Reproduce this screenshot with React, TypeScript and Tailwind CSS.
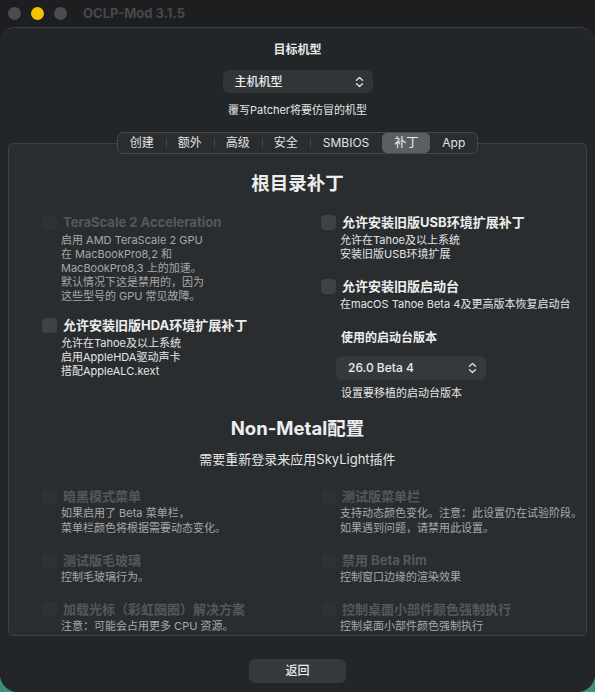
import React from "react";

const FONT = { fontFamily: 'Inter, "Noto Sans CJK SC", "Liberation Sans", sans-serif' };

function Chevrons() {
  return (
    <svg width="9" height="12" viewBox="0 0 9 12" fill="none" stroke="#d8d8d8" strokeWidth="1.5" strokeLinecap="round" strokeLinejoin="round">
      <path d="M1.5 4.2 4.5 1.5 7.5 4.2" />
      <path d="M1.5 7.8 4.5 10.5 7.5 7.8" />
    </svg>
  );
}

function Check({ disabled }: { disabled?: boolean }) {
  return (
    <div className={disabled ? "w-[15px] h-[15px] rounded-[4px] shrink-0 bg-[#2f3234]" : "w-[15px] h-[15px] rounded-[4px] shrink-0 bg-[#3f4244]"} />
  );
}

function Item({
  label,
  lines,
  disabled,
  loose,
}: {
  label: string;
  lines: string[];
  disabled?: boolean;
  loose?: boolean;
}) {
  return (
    <div className="flex flex-col">
      <div className="flex items-center gap-[6px] h-[16px]">
        <Check disabled={disabled} />
        <span
          className={
            disabled
              ? "text-[13px] leading-[16px] font-bold text-[#55585b] whitespace-nowrap"
              : "text-[13px] leading-[16px] font-bold text-[#ededed] whitespace-nowrap"
          }
        >
          {label}
        </span>
      </div>
      <div
        className={
          (loose ? "mt-[2px] leading-[15px] " : "mt-[3px] leading-[14px] ") +
          (disabled ? "pl-[19px] text-[11px] text-[#a6a8aa]" : "pl-[19px] text-[11px] text-[#e4e4e4]")
        }
      >
        {lines.map((l, i) => (
          <div key={i} className="whitespace-nowrap">
            {l}
          </div>
        ))}
      </div>
    </div>
  );
}

const tabs = ["创建", "额外", "高级", "安全", "SMBIOS", "补丁", "App"];

export default function App() {
  return (
    <div className="w-[595px] h-[692px] bg-[#3f8c7f] overflow-hidden" style={FONT}>
      <div className="h-full flex flex-col bg-[#1d1e20] rounded-b-[18px] overflow-hidden">
        {/* title bar */}
        <div className="h-[27px] shrink-0 flex items-center pl-[8px]">
          <div className="flex items-center gap-[10px]">
            <div className="w-[13px] h-[13px] rounded-full bg-[#4a4c4f]" />
            <div className="w-[13px] h-[13px] rounded-full bg-[#f5c400]" />
            <div className="w-[13px] h-[13px] rounded-full bg-[#4a4c4f]" />
          </div>
          <span className="ml-[16px] text-[13px] font-bold text-[#46484b]">OCLP-Mod 3.1.5</span>
        </div>

        {/* sheet */}
        <div className="flex-1 flex flex-col items-center bg-[#232628] rounded-t-[15px] rounded-b-[18px] border-t border-[#3b3d40] pt-[14px]">
          <div className="text-[12px] leading-[16px] font-bold text-[#e6e6e6]">目标机型</div>
          <div className="mt-[12px] w-[150px] h-[23px] rounded-[6px] bg-[#323537] flex items-center justify-between pl-[12px] pr-[9px]">
            <span className="text-[12px] font-medium text-[#ececec]">主机机型</span>
            <Chevrons />
          </div>
          <div className="mt-[10px] text-[11px] leading-[14px] text-[#e4e4e4]">覆写Patcher将要仿冒的机型</div>

          {/* tabs */}
          <div className="relative z-10 mt-[15px] h-[22px] flex items-stretch rounded-[6px] border border-[#47494c] bg-[#2a2d2f]">
            {tabs.map((t, i) => {
              const sel = t === "补丁";
              const showSep = i > 0 && i < 5;
              return (
                <div key={t} className="relative flex items-stretch">
                  {showSep && <div className="absolute left-0 top-[6px] w-px h-[9px] bg-[#45484b]" />}
                  <div
                    className={
                      sel
                        ? "px-[12px] flex items-center rounded-[5px] bg-[#5c5f62] text-[12px] text-[#f0f0f0]"
                        : t === "SMBIOS"
                        ? "px-[13px] flex items-center text-[12px] text-[#e2e2e2]"
                        : "px-[12px] flex items-center text-[12px] text-[#e2e2e2]"
                    }
                  >
                    {t}
                  </div>
                </div>
              );
            })}
          </div>

          {/* group box */}
          <div className="-mt-[11px] w-[579px] h-[493px] shrink-0 rounded-[5px] border border-[#3f4245] bg-[#2a2d2f] overflow-hidden flex flex-col">
            <div className="pt-[27px] text-center text-[18.5px] leading-[24px] font-bold text-[#ededed]">根目录补丁</div>

            <div className="mt-[19px] pl-[33px] grid grid-cols-[279px_1fr]">
              <div className="flex flex-col">
                <Item
                  disabled
                  label="TeraScale 2 Acceleration"
                  lines={[
                    "启用 AMD TeraScale 2 GPU",
                    "在 MacBookPro8,2 和",
                    "MacBookPro8,3 上的加速。",
                    "默认情况下这是禁用的，因为",
                    "这些型号的 GPU 常见故障。",
                  ]}
                />
                <div className="mt-[14px]">
                  <Item
                    label="允许安装旧版HDA环境扩展补丁"
                    lines={["允许在Tahoe及以上系统", "启用AppleHDA驱动声卡", "搭配AppleALC.kext"]}
                  />
                </div>
              </div>
              <div className="flex flex-col">
                <Item label="允许安装旧版USB环境扩展补丁" lines={["允许在Tahoe及以上系统", "安装旧版USB环境扩展"]} />
                <div className="mt-[17px]">
                  <Item label="允许安装旧版启动台" lines={["在macOS Tahoe Beta 4及更高版本恢复启动台"]} />
                </div>
                <div className="mt-[19px] pl-[20px] text-[12px] leading-[16px] font-bold text-[#ededed]">使用的启动台版本</div>
                <div className="mt-[10px] ml-[15px] w-[150px] h-[24px] rounded-[6px] bg-[#36393b] flex items-center justify-between pl-[12px] pr-[9px]">
                  <span className="text-[12px] font-medium text-[#ececec]">26.0 Beta 4</span>
                  <Chevrons />
                </div>
                <div className="mt-[6px] pl-[20px] text-[11px] leading-[14px] text-[#e4e4e4]">设置要移植的启动台版本</div>
              </div>
            </div>

            <div className="mt-[16px] text-center text-[18.5px] leading-[24px] font-bold text-[#ededed]">Non-Metal配置</div>
            <div className="mt-[11px] text-center text-[13px] leading-[16px] text-[#e6e6e6]">需要重新登录来应用SkyLight插件</div>

            <div className="mt-[21px] pl-[33px] grid grid-cols-[279px_1fr] gap-y-[16px]">
              <Item disabled loose label="暗黑模式菜单" lines={["如果启用了 Beta 菜单栏，", "菜单栏颜色将根据需要动态变化。"]} />
              <Item
                disabled
                loose
                label="测试版菜单栏"
                lines={["支持动态颜色变化。注意：此设置仍在试验阶段。", "如果遇到问题，请禁用此设置。"]}
              />
              <Item disabled loose label="测试版毛玻璃" lines={["控制毛玻璃行为。"]} />
              <Item disabled loose label="禁用 Beta Rim" lines={["控制窗口边缘的渲染效果"]} />
              <Item disabled loose label="加载光标（彩虹圈圈）解决方案" lines={["注意：可能会占用更多 CPU 资源。"]} />
              <Item disabled loose label="控制桌面小部件颜色强制执行" lines={["控制桌面小部件颜色强制执行"]} />
            </div>
          </div>

          <div className="mt-[23px] w-[97px] h-[24px] rounded-[6px] bg-[#36393b] flex items-center justify-center text-[12px] font-medium text-[#ececec]">
            返回
          </div>
        </div>
      </div>
    </div>
  );
}
